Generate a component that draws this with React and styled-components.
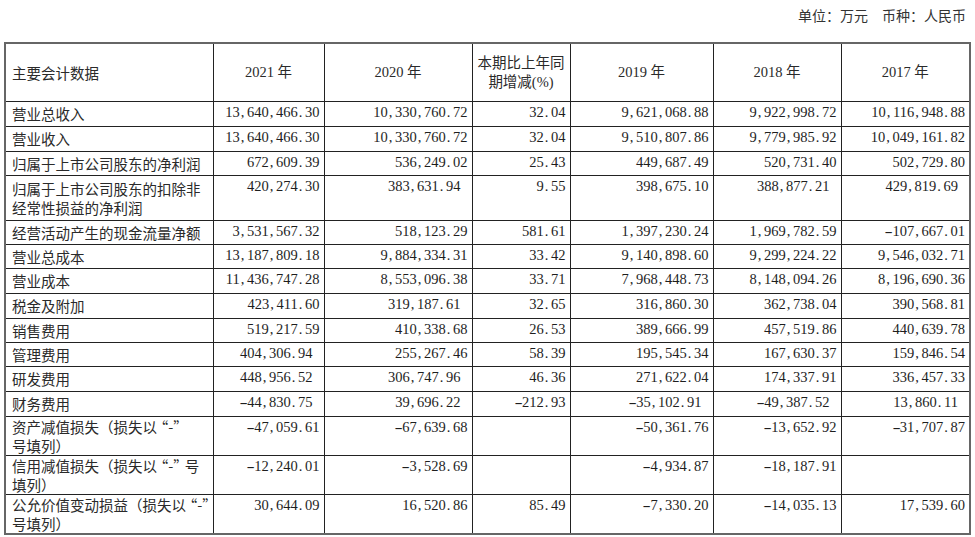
import React from "react";
import styled, { createGlobalStyle } from "styled-components";

const Global = createGlobalStyle`
  html, body { margin: 0; padding: 0; background: #fff; }
  body { font-family: "Liberation Serif", "Noto Sans CJK SC", serif; color: #222; }
`;

const Page = styled.div`
  width: 975px;
  padding: 0 6px 0 4px;
  box-sizing: border-box;
`;

const Caption = styled.div`
  height: 42px;
  display: flex;
  justify-content: flex-end;
  align-items: flex-start;
  padding: 6px 3px 0 0;
  box-sizing: border-box;
  font-family: "Noto Sans CJK SC", sans-serif;
  font-size: 14px;
  line-height: 18px;
  color: #333;
  gap: 14px;
`;

const Table = styled.table`
  width: 965px;
  table-layout: fixed;
  border-collapse: collapse;
  border: 2px solid #666;
`;

const HeadCell = styled.th`
  height: 57px;
  padding: 0 0 0 ${(p) => (p.$left ? "6px" : "0")};
  border: 1px solid #222;
  font-weight: 400;
  font-size: 14.5px;
  line-height: 19px;
  text-align: ${(p) => (p.$left ? "left" : "center")};
  vertical-align: middle;
  color: #2a2a2a;
  font-family: ${(p) =>
    p.$left ? `"Noto Sans CJK SC", sans-serif` : `"Liberation Serif", "Noto Sans CJK SC", serif`};
`;

const Row = styled.tr`
  height: ${(p) => p.$h}px;
`;

const LabelCell = styled.td`
  border: 1px solid #222;
  padding: 0 0 0 6px;
  font-family: "Noto Sans CJK SC", sans-serif;
  font-size: 14.5px;
  line-height: ${(p) => p.$lh}px;
  white-space: nowrap;
  vertical-align: middle;
  color: #2a2a2a;
`;

const Quote = styled.span`
  margin: ${(p) => (p.$open ? "0 0 0 -0.22em" : "0 -0.22em 0 0")};
`;

const NumCell = styled.td`
  border: 1px solid #222;
  padding: 1px ${(p) => (p.$pad ? 11 : 4)}px 0 0;
  font-family: "Liberation Serif", serif;
  font-size: 14.5px;
  line-height: 18px;
  text-align: right;
  vertical-align: top;
  white-space: nowrap;
  color: #1e1e1e;
`;

const Punct = styled.span`
  display: inline-block;
  width: 0.5em;
  text-align: left;
  padding-left: 1px;
  box-sizing: border-box;
`;

const Minus = styled.span`
  display: inline-block;
  width: 0.5em;
  text-align: center;
  transform: scaleX(1.7);
`;

const Num = ({ text }) =>
  text.split("").map((c, i) =>
    c === "-" ? (
      <Minus key={i}>{c}</Minus>
    ) : c === "," || c === "." ? (
      <Punct key={i}>{c}</Punct>
    ) : (
      <React.Fragment key={i}>{c}</React.Fragment>
    )
  );

const Label = ({ text }) =>
  text.split(/([“”])/).map((part, i) =>
    part === "“" || part === "”" ? (
      <Quote key={i} $open={part === "“"}>
        {part}
      </Quote>
    ) : (
      <React.Fragment key={i}>{part}</React.Fragment>
    )
  );

const widths = [208, 111, 148, 98, 143, 128, 129];

const rows = [
  { label: ["营业总收入"], h: 25, v: ["13,640,466.30", "10,330,760.72", "32.04", "9,621,068.88", "9,922,998.72", "10,116,948.88"] },
  { label: ["营业收入"], h: 25, v: ["13,640,466.30", "10,330,760.72", "32.04", "9,510,807.86", "9,779,985.92", "10,049,161.82"] },
  { label: ["归属于上市公司股东的净利润"], h: 24, v: ["672,609.39", "536,249.02", "25.43", "449,687.49", "520,731.40", "502,729.80"] },
  { label: ["归属于上市公司股东的扣除非", "经常性损益的净利润"], h: 45, lh: 19, pad: [1, 4, 5], v: ["420,274.30", "383,631.94", "9.55", "398,675.10", "388,877.21", "429,819.69"] },
  { label: ["经营活动产生的现金流量净额"], h: 24, v: ["3,531,567.32", "518,123.29", "581.61", "1,397,230.24", "1,969,782.59", "-107,667.01"] },
  { label: ["营业总成本"], h: 24, v: ["13,187,809.18", "9,884,334.31", "33.42", "9,140,898.60", "9,299,224.22", "9,546,032.71"] },
  { label: ["营业成本"], h: 25, v: ["11,436,747.28", "8,553,096.38", "33.71", "7,968,448.73", "8,148,094.26", "8,196,690.36"] },
  { label: ["税金及附加"], h: 25, pad: [1], v: ["423,411.60", "319,187.61", "32.65", "316,860.30", "362,738.04", "390,568.81"] },
  { label: ["销售费用"], h: 24, v: ["519,217.59", "410,338.68", "26.53", "389,666.99", "457,519.86", "440,639.78"] },
  { label: ["管理费用"], h: 24, pad: [0], v: ["404,306.94", "255,267.46", "58.39", "195,545.34", "167,630.37", "159,846.54"] },
  { label: ["研发费用"], h: 25, pad: [0, 1], v: ["448,956.52", "306,747.96", "46.36", "271,622.04", "174,337.91", "336,457.33"] },
  { label: ["财务费用"], h: 25, pad: [0, 1, 3, 4, 5], v: ["-44,830.75", "39,696.22", "-212.93", "-35,102.91", "-49,387.52", "13,860.11"] },
  { label: ["资产减值损失（损失以“-”", "号填列）"], h: 38, lh: 19, v: ["-47,059.61", "-67,639.68", "", "-50,361.76", "-13,652.92", "-31,707.87"] },
  { label: ["信用减值损失（损失以“-”号", "填列）"], h: 39, lh: 19, v: ["-12,240.01", "-3,528.69", "", "-4,934.87", "-18,187.91", ""] },
  { label: ["公允价值变动损益（损失以“-”", "号填列）"], h: 39, lh: 19, v: ["30,644.09", "16,520.86", "85.49", "-7,330.20", "-14,035.13", "17,539.60"] },
];

const headers = ["2021 年", "2020 年", null, "2019 年", "2018 年", "2017 年"];

export default function App() {
  return (
    <Page>
      <Global />
      <Caption>
        <span>单位：万元</span>
        <span>币种：人民币</span>
      </Caption>
      <Table>
        <colgroup>
          {widths.map((w, i) => (
            <col key={i} style={{ width: w }} />
          ))}
        </colgroup>
        <thead>
          <tr>
            <HeadCell $left>主要会计数据</HeadCell>
            {headers.map((h, i) =>
              h ? (
                <HeadCell key={i}>{h}</HeadCell>
              ) : (
                <HeadCell key={i}>
                  本期比上年同
                  <br />
                  期增减(%)
                </HeadCell>
              )
            )}
          </tr>
        </thead>
        <tbody>
          {rows.map((r, ri) => (
            <Row key={ri} $h={r.h}>
              <LabelCell $lh={r.lh || 18}>
                {r.label.map((l, li) => (
                  <React.Fragment key={li}>
                    {li > 0 && <br />}
                    <Label text={l} />
                  </React.Fragment>
                ))}
              </LabelCell>
              {r.v.map((v, vi) => (
                <NumCell key={vi} $pad={(r.pad || []).includes(vi)}>
                  <Num text={v} />
                </NumCell>
              ))}
            </Row>
          ))}
        </tbody>
      </Table>
    </Page>
  );
}
